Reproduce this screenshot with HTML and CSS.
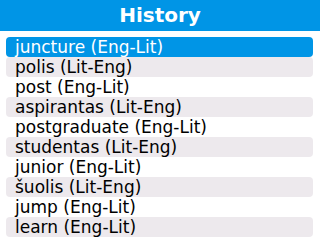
FILE: index.html
```html
<!DOCTYPE html>
<html>
<head>
<meta charset="utf-8">
<link rel="stylesheet" href="styles.css">
</head>
<body>
<div class="header">History</div>
<ul class="list">
  <li class="row selected">juncture (Eng-Lit)</li>
  <li class="row alt">polis (Lit-Eng)</li>
  <li class="row">post (Eng-Lit)</li>
  <li class="row alt">aspirantas (Lit-Eng)</li>
  <li class="row">postgraduate (Eng-Lit)</li>
  <li class="row alt">studentas (Lit-Eng)</li>
  <li class="row">junior (Eng-Lit)</li>
  <li class="row alt">šuolis (Lit-Eng)</li>
  <li class="row">jump (Eng-Lit)</li>
  <li class="row alt">learn (Eng-Lit)</li>
</ul>
</body>
</html>
```

FILE: styles.css
```css
html, body {
  margin: 0;
  padding: 0;
  background: #ffffff;
  width: 320px;
  height: 240px;
  overflow: hidden;
  font-family: "DejaVu Sans", sans-serif;
}
.header {
  height: 31px;
  background: #0095e6;
  color: #ffffff;
  font-weight: bold;
  font-size: 20px;
  line-height: 31px;
  text-align: center;
}
.list {
  list-style: none;
  margin: 6px 7px 0 6px;
  padding: 0;
}
.row {
  height: 20px;
  line-height: 20px;
  font-size: 17px;
  color: #000000;
  padding-left: 9px;
  border-radius: 4px;
  white-space: nowrap;
}
.alt {
  background: #ede9ed;
}
.selected {
  background: #0095e6;
  color: #ffffff;
}
```
